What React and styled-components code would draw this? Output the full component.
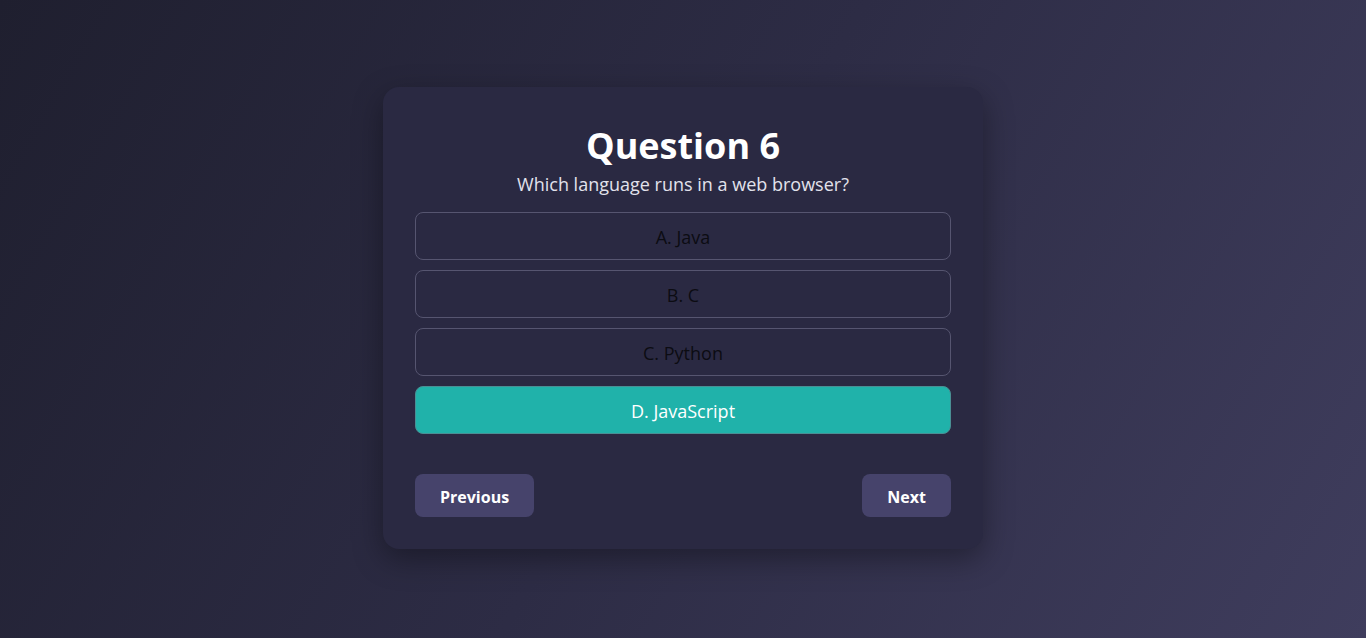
import React, { useState } from "react";
import styled, { createGlobalStyle } from "styled-components";

const Global = createGlobalStyle`
  html, body { margin: 0; padding: 0; }
  body {
    font-family: "Open Sans", "Noto Sans", sans-serif;
    min-height: 100vh;
    background: linear-gradient(120deg, #1f1f2f 0%, #2d2c45 50%, #3f3d5d 100%);
  }
`;

const Page = styled.div`
  min-height: 638px;
  display: flex;
  justify-content: center;
  align-items: flex-start;
  padding-top: 87px;
  box-sizing: border-box;
`;

const Card = styled.div`
  width: 600px;
  box-sizing: border-box;
  padding: 32px;
  background: #2a2942;
  border-radius: 16px;
  box-shadow: 0 10px 30px rgba(0, 0, 0, 0.35);
  display: flex;
  flex-direction: column;
`;

const Title = styled.h1`
  margin: 4px 0 0;
  font-size: 36px;
  line-height: 46px;
  font-weight: 700;
  color: #ffffff;
  text-align: center;
`;

const Subtitle = styled.p`
  margin: 3px 0 16px;
  font-size: 18px;
  line-height: 24px;
  color: #e2e2ec;
  text-align: center;
`;

const Options = styled.div`
  display: flex;
  flex-direction: column;
  gap: 10px;
`;

const Option = styled.button`
  height: 48px;
  padding-top: 2px;
  border-radius: 8px;
  border: 1px solid ${(p) => (p.$selected ? "#4a8f94" : "#565570")};
  background: ${(p) => (p.$selected ? "#20b2aa" : "transparent")};
  color: ${(p) => (p.$selected ? "#ffffff" : "#0c0c12")};
  font-family: inherit;
  font-size: 18px;
  cursor: pointer;
`;

const Nav = styled.div`
  display: flex;
  justify-content: space-between;
  margin-top: 40px;
`;

const NavButton = styled.button`
  height: 43px;
  padding: 2px 25px 0;
  border: none;
  border-radius: 8px;
  background: #46436b;
  color: #ffffff;
  font-family: inherit;
  font-weight: 700;
  font-size: 16px;
  cursor: pointer;
`;

export default function App() {
  const [sel, setSel] = useState(3);
  const opts = ["A. Java", "B. C", "C. Python", "D. JavaScript"];
  return (
    <>
      <Global />
      <Page>
        <Card>
          <Title>Question 6</Title>
          <Subtitle>Which language runs in a web browser?</Subtitle>
          <Options>
            {opts.map((o, i) => (
              <Option key={o} $selected={sel === i} onClick={() => setSel(i)}>
                {o}
              </Option>
            ))}
          </Options>
          <Nav>
            <NavButton>Previous</NavButton>
            <NavButton>Next</NavButton>
          </Nav>
        </Card>
      </Page>
    </>
  );
}
